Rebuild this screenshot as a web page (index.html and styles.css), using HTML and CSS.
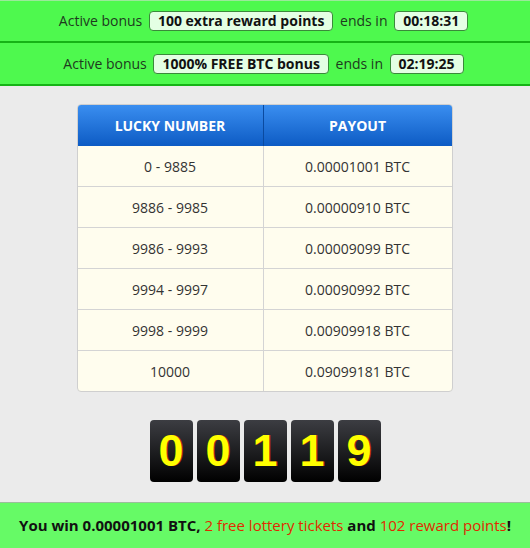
FILE: index.html
```html
<!DOCTYPE html>
<html>
<head>
<meta charset="utf-8">
<link rel="stylesheet" href="styles.css">
</head>
<body>
<div class="bar first">Active bonus <span class="badge">100 extra reward points</span> ends in <span class="badge">00:18:31</span></div>
<div class="bar">Active bonus <span class="badge">1000% FREE BTC bonus</span> ends in <span class="badge">02:19:25</span></div>
<main class="content">
  <table class="payout">
    <thead><tr><th class="c1">LUCKY NUMBER</th><th>PAYOUT</th></tr></thead>
    <tbody>
      <tr><td>0 - 9885</td><td>0.00001001 BTC</td></tr>
      <tr><td>9886 - 9985</td><td>0.00000910 BTC</td></tr>
      <tr><td>9986 - 9993</td><td>0.00009099 BTC</td></tr>
      <tr><td>9994 - 9997</td><td>0.00090992 BTC</td></tr>
      <tr><td>9998 - 9999</td><td>0.00909918 BTC</td></tr>
      <tr><td>10000</td><td>0.09099181 BTC</td></tr>
    </tbody>
  </table>
  <div class="digits">
    <span class="digit">0</span><span class="digit">0</span><span class="digit">1</span><span class="digit">1</span><span class="digit">9</span>
  </div>
</main>
<div class="win">You win 0.00001001 BTC, <span class="red">2 free lottery tickets</span> and <span class="red">102 reward points</span>!</div>
</body>
</html>
```
FILE: styles.css
```css
html, body { margin: 0; padding: 0; }
body {
  background: #ebebeb;
  font-family: "Open Sans", "DejaVu Sans", sans-serif;
  color: #222;
  width: 530px;
  height: 548px;
  overflow: hidden;
  display: flex;
  flex-direction: column;
}
.bar {
  background: #4ef94e;
  height: 41px;
  line-height: 41px;
  border-bottom: 2px solid #16b316;
  text-align: center;
  font-size: 14px;
  color: #1e3a1e;
}
.bar.first { border-top: 1px solid #9be99b; height: 40px; line-height: 40px; }
.badge {
  display: inline-block;
  vertical-align: middle;
  background: #e4ffe4;
  border: 1px solid #3a8a3a;
  border-radius: 4px;
  padding: 0 8px;
  margin: -2px 3px 0;
  height: 18px;
  line-height: 18px;
  font-weight: bold;
  color: #111;
}
.content {
  flex: 1;
  display: flex;
  flex-direction: column;
  align-items: center;
  padding-top: 18px;
}
.payout {
  width: 376px;
  margin-right: 1px;
  border-collapse: separate;
  border-spacing: 0;
  border: 1px solid #cfcfcf;
  border-radius: 4px;
  overflow: hidden;
  background: #fffdee;
  font-size: 14px;
  color: #333;
}
.payout th {
  height: 41px;
  padding: 0;
  background: linear-gradient(#3a8ef0, #0d5bc4);
  color: #fff;
  font-weight: bold;
  font-size: 14px;
  text-align: center;
  border-left: 1px solid #0a4aa0;
}
.payout th.c1 { width: 185px; }
.payout th:first-child, .payout td:first-child { border-left: none; }
.payout td {
  height: 40px;
  padding: 0;
  text-align: center;
  border-top: 1px solid #d4d4d4;
  border-left: 1px solid #d4d4d4;
}
.payout tbody tr:first-child td { border-top: none; }
.digits {
  display: flex;
  gap: 4px;
  margin-top: 28px;
}
.digit {
  width: 43px;
  height: 62px;
  border-radius: 4px;
  background: linear-gradient(#3c3d42, #000);
  color: #ffff00;
  font-family: "Liberation Sans", Arial, sans-serif;
  font-weight: bold;
  font-size: 45px;
  display: flex;
  align-items: center;
  justify-content: center;
  text-shadow: 1px 0 0 #b32a00;
}
.win {
  background: #66fa66;
  border-top: 1px solid #9bbf9b;
  height: 45px;
  line-height: 45px;
  text-align: center;
  font-size: 15px;
  font-weight: bold;
  color: #111;
}
.red { color: #e02a00; font-weight: normal; }
```
